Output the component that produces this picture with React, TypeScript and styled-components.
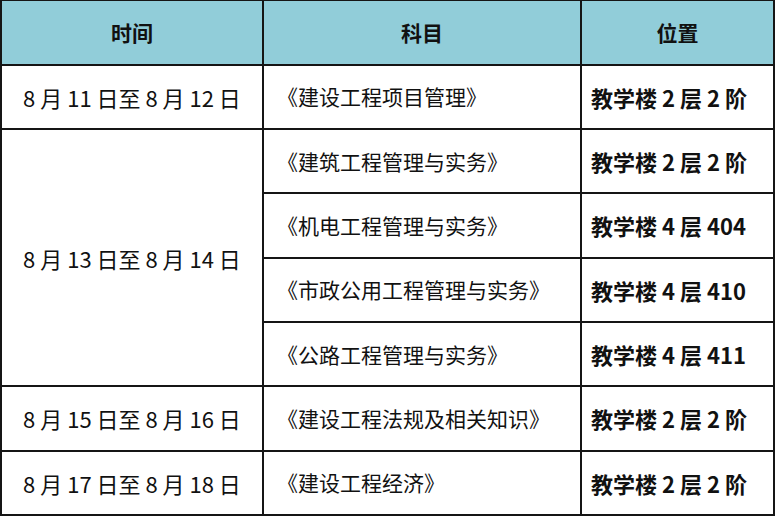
import styled, { createGlobalStyle } from "styled-components";

const GlobalStyle = createGlobalStyle`
  html, body {
    margin: 0;
    padding: 0;
    background: #ffffff;
  }
  body {
    font-family: "Noto Sans CJK SC", "Noto Sans", sans-serif;
    color: #111;
  }
`;

const Table = styled.table`
  width: 775px;
  height: 516px;
  table-layout: fixed;
  border-collapse: collapse;
  border-left: 2px solid #151515;
  border-top: 1px solid #151515;
  border-right: 2px solid #6c8a90;
`;

const Row = styled.tr`
  height: 64px;
`;

const HeadCell = styled.th`
  background: #91cdd9;
  border: 2px solid #151515;
  border-top: none;
  font-size: 21px;
  font-weight: 700;
  text-align: center;
  vertical-align: middle;
  padding: 0;
  line-height: 1;
`;

type Kind = "date" | "subject" | "room";

const Cell = styled.td<{ kind: Kind }>`
  border: 2px solid #151515;
  font-size: ${(props) => (props.kind === "subject" ? "21px" : "22px")};
  font-weight: ${(props) => (props.kind === "room" ? 700 : 400)};
  text-align: ${(props) => (props.kind === "date" ? "center" : "left")};
  padding: 0 0 0
    ${(props) =>
      props.kind === "date" ? "0" : props.kind === "room" ? "9px" : "13px"};
  vertical-align: middle;
  white-space: nowrap;
  line-height: 1;
`;

interface IExam {
  date: string;
  subjects: { name: string; room: string }[];
}

const exams: IExam[] = [
  {
    date: "8 月 11 日至 8 月 12 日",
    subjects: [{ name: "《建设工程项目管理》", room: "教学楼 2 层 2 阶" }],
  },
  {
    date: "8 月 13 日至 8 月 14 日",
    subjects: [
      { name: "《建筑工程管理与实务》", room: "教学楼 2 层 2 阶" },
      { name: "《机电工程管理与实务》", room: "教学楼 4 层 404" },
      { name: "《市政公用工程管理与实务》", room: "教学楼 4 层 410" },
      { name: "《公路工程管理与实务》", room: "教学楼 4 层 411" },
    ],
  },
  {
    date: "8 月 15 日至 8 月 16 日",
    subjects: [{ name: "《建设工程法规及相关知识》", room: "教学楼 2 层 2 阶" }],
  },
  {
    date: "8 月 17 日至 8 月 18 日",
    subjects: [{ name: "《建设工程经济》", room: "教学楼 2 层 2 阶" }],
  },
];

const App = () => {
  return (
    <>
      <GlobalStyle />
      <Table>
        <colgroup>
          <col style={{ width: 262 }} />
          <col style={{ width: 318 }} />
          <col />
        </colgroup>
        <thead>
          <Row>
            <HeadCell>时间</HeadCell>
            <HeadCell>科目</HeadCell>
            <HeadCell>位置</HeadCell>
          </Row>
        </thead>
        <tbody>
          {exams.map((exam) =>
            exam.subjects.map((subject, i) => (
              <Row key={exam.date + subject.name}>
                {i === 0 && (
                  <Cell kind="date" rowSpan={exam.subjects.length}>
                    {exam.date}
                  </Cell>
                )}
                <Cell kind="subject">{subject.name}</Cell>
                <Cell kind="room">{subject.room}</Cell>
              </Row>
            ))
          )}
        </tbody>
      </Table>
    </>
  );
};

export default App;
